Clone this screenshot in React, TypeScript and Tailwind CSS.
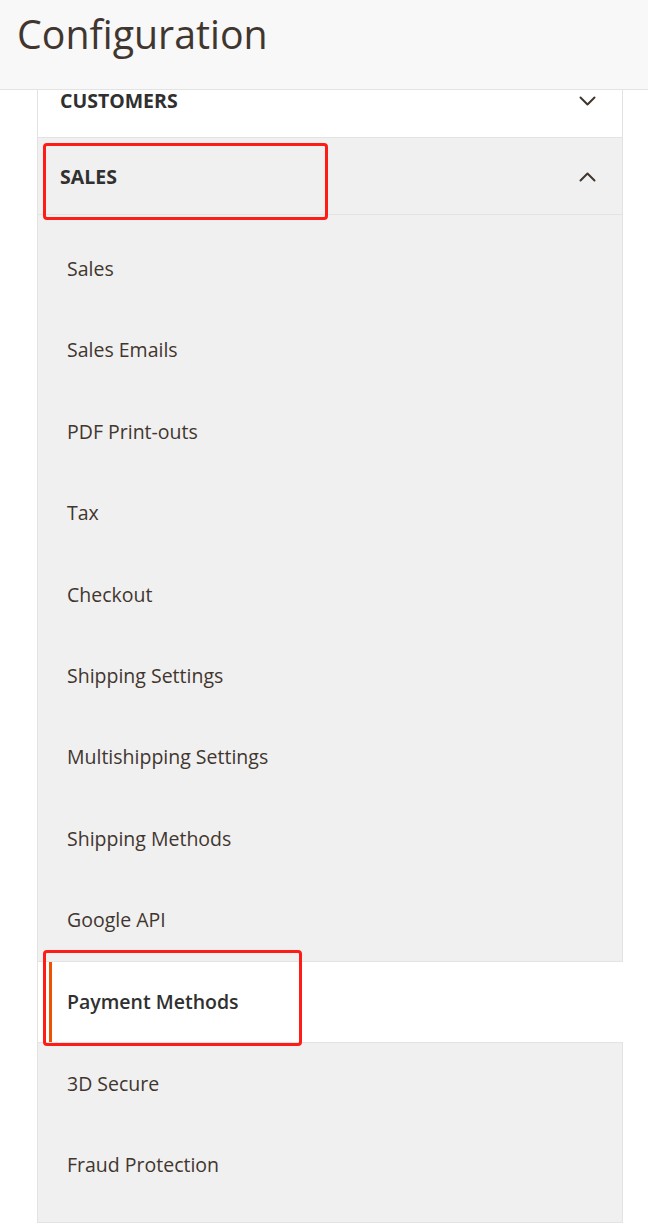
const groupOne = [
  "Sales",
  "Sales Emails",
  "PDF Print-outs",
  "Tax",
  "Checkout",
  "Shipping Settings",
  "Multishipping Settings",
  "Shipping Methods",
  "Google API",
];

const groupTwo = ["3D Secure", "Fraud Protection"];

function Chevron({ up }: { up?: boolean }) {
  return (
    <svg width="17" height="10" viewBox="0 0 17 10" fill="none" className="shrink-0">
      <polyline
        points={up ? "1.5,8.5 8.5,1.5 15.5,8.5" : "1.5,1.5 8.5,8.5 15.5,1.5"}
        stroke="#41362f"
        strokeWidth="2"
        strokeLinecap="round"
        strokeLinejoin="round"
      />
    </svg>
  );
}

function NavItem({ label }: { label: string }) {
  return (
    <div className="flex h-[81.4px] items-center pl-[29px] text-[19.5px] text-[#41362f]">
      {label}
    </div>
  );
}

export default function App() {
  return (
    <div className="relative min-h-screen w-[648px] bg-white font-['Open_Sans',sans-serif]">
      <header className="h-[90px] border-b border-[#e3e3e3] bg-[#f8f8f8] pl-[17px] pt-[15px]">
        <h1 className="text-[39.3px] font-normal leading-[39px] text-[#41362f]">Configuration</h1>
      </header>

      <nav className="ml-[37px] w-[586px]">
        <div className="flex h-[48px] items-start justify-between border-x border-b border-[#e3e3e3] bg-white pl-[22px] pr-[26px] pt-[2px]">
          <span className="text-[19.5px] font-bold leading-[18px] text-[#303030]">CUSTOMERS</span>
          <span className="pt-[4px]">
            <Chevron />
          </span>
        </div>

        <div className="flex h-[77px] items-center justify-between border-x border-b border-[#e3e3e3] bg-[#f0f0f0] pl-[22px] pr-[26px] pt-[2px]">
          <span className="text-[19.5px] font-bold leading-[18px] text-[#303030]">SALES</span>
          <Chevron up />
        </div>

        <div className="border-x border-b border-[#e3e3e3] bg-[#f0f0f0] pt-[13px]">
          {groupOne.map((label) => (
            <NavItem key={label} label={label} />
          ))}
        </div>

        <div className="flex h-[80.5px] border-l border-[#e3e3e3] bg-white pl-[11px]">
          <div className="flex flex-1 items-center border-l-[3px] border-[#eb5202] pl-[15px] text-[19.5px] font-semibold text-[#303030]">
            Payment Methods
          </div>
        </div>

        <div className="border-x border-y border-[#e3e3e3] bg-[#f0f0f0] pb-[16px]">
          {groupTwo.map((label) => (
            <NavItem key={label} label={label} />
          ))}
        </div>
      </nav>

      {/* annotation boxes */}
      <div className="absolute left-[43px] top-[143px] h-[77px] w-[285px] rounded-[4px] border-[3px] border-[#fd1c16]" />
      <div className="absolute left-[43px] top-[950px] h-[96px] w-[259px] rounded-[4px] border-[3px] border-[#fd1c16]" />
    </div>
  );
}
